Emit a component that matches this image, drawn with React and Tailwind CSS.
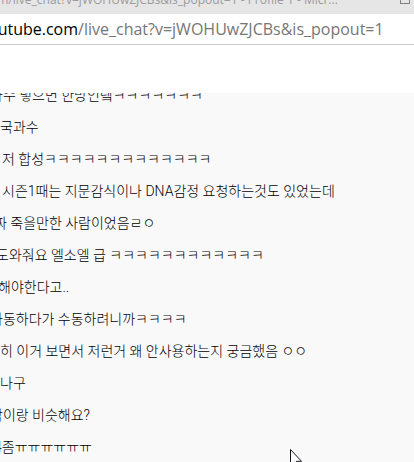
const messages = [
  { text: "과수 넣으면 한방인뎈ㅋㅋㅋㅋㅋㅋㅋ", start: "-ml-[10px]" },
  { text: "국과수", start: "ml-0" },
  { text: "저 합성ㅋㅋㅋㅋㅋㅋㅋㅋㅋㅋㅋㅋㅋ", start: "ml-0.5" },
  { text: "시즌1때는 지문감식이나 DNA감정 요청하는것도 있었는데", start: "ml-0.5" },
  { text: "짜 죽을만한 사람이었음ㄹㅇ", start: "-ml-1.5" },
  { text: "도와줘요 엘소엘 급 ㅋㅋㅋㅋㅋㅋㅋㅋㅋㅋㅋㅋ", start: "-ml-1" },
  { text: "해야한다고..", start: "-ml-0.5" },
  { text: "자동하다가 수동하려니까ㅋㅋㅋㅋ", start: "-ml-[10px]" },
  { text: "히 이거 보면서 저런거 왜 안사용하는지 궁금했음 ㅇㅇ", start: "ml-0" },
  { text: "나구", start: "ml-0" },
  { text: "막이랑 비슷해요?", start: "-ml-[10px]" },
  { text: "4좀ㅠㅠㅠㅠㅠㅠ", start: "-ml-1.5" },
];

function TitleBar() {
  return (
    <header className="flex h-3.5 items-end justify-between overflow-hidden bg-[#e6e6e6] pr-1 text-[#9b9b9b]">
      <p className="-ml-2.5 pb-1 text-[12px] leading-5 whitespace-nowrap">
        om/live_chat?v=jWOHUwZJCBs&amp;is_popout=1 - Profile 1 - Micr...
      </p>
      <button type="button" aria-label="Maximize" className="mb-2.5 size-2.5 shrink-0 border border-[#808080]" />
    </header>
  );
}

function AddressBar() {
  return (
    <div className="flex h-[31px] items-center overflow-hidden border-b border-[#cccccc] bg-white text-[16px] leading-6 whitespace-nowrap">
      <p className="-ml-3 text-[#767676]">
        <span className="text-black">outube.com</span>/live_chat?v=jWOHUwZJCBs&amp;is_popout=1
      </p>
    </div>
  );
}

export default function App() {
  return (
    <div className="relative flex h-screen flex-col overflow-hidden bg-white font-['Open_Sans',sans-serif]">
      <TitleBar />
      <AddressBar />
      <main className="mt-12 flex-1 overflow-hidden bg-[#f9f9f9] font-[Roboto,'Noto_Sans_CJK_KR',sans-serif] text-[14px] font-light text-black">
        <ul className="-mt-3.5">
          {messages.map((message) => (
            <li key={message.text} className="h-8 leading-8 whitespace-nowrap">
              <p className={message.start}>{message.text}</p>
            </li>
          ))}
        </ul>
      </main>
      <svg className="absolute top-[449px] left-[290px] h-[19px] w-3" viewBox="0 0 12 19" aria-hidden="true">
        <path d="M.5.5v16l3.7-3.6 2.4 5.5 2.2-1-2.4-5.1h5.1z" fill="white" stroke="#15151f" />
      </svg>
    </div>
  );
}
